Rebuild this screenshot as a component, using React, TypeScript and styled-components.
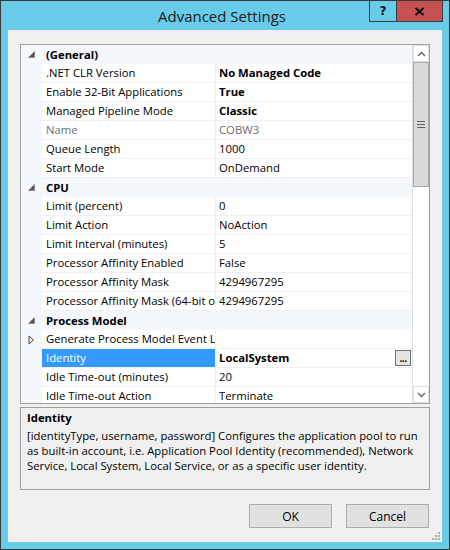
import React from "react";
import styled, { createGlobalStyle } from "styled-components";

const Global = createGlobalStyle`
  html, body { margin: 0; padding: 0; }
  body {
    width: 450px; height: 550px; overflow: hidden;
    font-family: "Open Sans", "Noto Sans", sans-serif;
    font-size: 11.3px; color: #000;
  }
`;

const Window = styled.div`
  width: 450px; height: 550px; box-sizing: border-box;
  background: #69cbea; border: 1px solid #3a3a3a;
  display: flex; flex-direction: column;
`;

const TitleBar = styled.div`
  height: 29px; display: grid; grid-template-columns: 1fr auto 1fr;
  align-items: center; padding-right: 6px;
`;

const Title = styled.div`
  grid-column: 2; font-size: 15px; color: #1a1a1a; padding-top: 1px;
  font-family: "Open Sans", "Noto Sans", sans-serif;
`;

const CaptionButtons = styled.div`
  grid-column: 3; justify-self: end; align-self: start; display: flex;
`;

const CaptionButton = styled.div<{ $w: number; $bg: string }>`
  width: ${(p) => p.$w}px; height: 21px; box-sizing: border-box;
  background: ${(p) => p.$bg}; border: 1px solid #3c3c3c; border-top: none;
  & + & { border-left: none; }
  display: flex; align-items: center; justify-content: center;
  font-family: "DejaVu Sans", sans-serif; font-weight: bold; font-size: 12px; color: #111;
`;

const Client = styled.div`
  position: relative; flex: 1; margin: 0 7px 7px 7px; background: #f0f0f0;
  padding: 14px 12px 14px 12px; display: flex; flex-direction: column;
`;

const Grid = styled.div`
  height: 360px; box-sizing: border-box; border: 1px solid #a0a0a0;
  display: flex; background: #fff;
`;

const Rows = styled.div`
  flex: 1; overflow: hidden; display: flex; flex-direction: column;
`;

const CategoryRow = styled.div`
  height: 19px; flex: none; display: grid; grid-template-columns: 21px 1fr;
  background: #f4f7fc; align-items: center; font-weight: bold; line-height: 19px;
`;

const CategoryLabel = styled.span`padding-left: 4px;`;

const Margin = styled.div`
  background: #f4f7fc; height: 100%; display: flex; align-items: center; justify-content: center;
`;

const PropRow = styled.div`
  height: 19px; flex: none; display: grid; grid-template-columns: 21px 174px 1fr;
  line-height: 18px;
`;

const NameCell = styled.div<{ $sel?: boolean; $dim?: boolean }>`
  box-sizing: border-box; border-bottom: 1px solid #f0f0f0; border-right: 1px solid #f0f0f0;
  padding-left: 4px; white-space: nowrap; overflow: hidden;
  background: ${(p) => (p.$sel ? "#3399ff" : "#fff")};
  color: ${(p) => (p.$sel ? "#fff" : p.$dim ? "#6d6d6d" : "#000")};
`;

const ValueCell = styled.div<{ $bold?: boolean; $dim?: boolean }>`
  box-sizing: border-box; border-bottom: 1px solid #f0f0f0; padding-left: 3px;
  display: flex; align-items: center; white-space: nowrap; overflow: hidden;
  font-weight: ${(p) => (p.$bold ? "bold" : "normal")};
  color: ${(p) => (p.$dim ? "#6d6d6d" : "#000")};
`;

const ValueText = styled.span`flex: 1;`;

const EllipsisButton = styled.div`
  width: 16px; height: 16px; box-sizing: border-box; margin-right: 1px;
  border: 1px solid #707070; background: #e5e5e5; font-weight: bold;
  font-size: 10px; line-height: 14px; text-align: center; letter-spacing: -0.5px;
`;

const Scrollbar = styled.div`
  width: 17px; flex: none; display: flex; flex-direction: column;
  border-left: 1px solid #e0e0e0; background: #fff; box-sizing: border-box;
`;

const ScrollArrow = styled.div`
  height: 17px; flex: none; display: flex; align-items: center; justify-content: center;
  border: 1px solid #e0e0e0; box-sizing: border-box; background: #fff;
`;

const Thumb = styled.div`
  height: 125px; flex: none; background: #dadada; border: 1px solid #a8a8a8;
  box-sizing: border-box; display: flex; align-items: center; justify-content: center;
`;

const Track = styled.div`flex: 1;`;

const Description = styled.div`
  margin-top: 3px; height: 83px; box-sizing: border-box; border: 1px solid #a0a0a0;
  padding: 2px 6px; line-height: 15px;
`;

const DescTitle = styled.div`font-weight: bold; margin-bottom: 3px;`;

const DescText = styled.div``;

const ButtonRow = styled.div`
  margin-top: 14px; display: flex; justify-content: flex-end; gap: 14px; padding-right: 1px;
`;

const Button = styled.div`
  width: 83px; height: 24px; box-sizing: border-box; background: #e1e1e1;
  border: 1px solid #adadad; display: flex; align-items: center; justify-content: center;
  font-size: 12px;
`;

const Grip = styled.svg`position: absolute; right: 2px; bottom: 2px;`;

const Expanded = () => (
  <svg width="7" height="7" viewBox="0 0 7 7">
    <polygon points="6.5,0.5 6.5,6.5 0.5,6.5" fill="#555" stroke="#777" strokeWidth="0.6" />
  </svg>
);

const Collapsed = () => (
  <svg width="7" height="10" viewBox="0 0 7 10">
    <polygon points="1,1 5.5,5 1,9" fill="none" stroke="#444" strokeWidth="1" />
  </svg>
);

const Chevron = ({ up }: { up?: boolean }) => (
  <svg width="9" height="6" viewBox="0 0 9 6">
    <polyline
      points={up ? "1,5 4.5,1.5 8,5" : "1,1 4.5,4.5 8,1"}
      fill="none" stroke="#606060" strokeWidth="1.3"
    />
  </svg>
);

type Item =
  | { kind: "cat"; label: string }
  | { kind: "prop"; name: string; value: string; bold?: boolean; dim?: boolean; sel?: boolean; collapsed?: boolean; ellipsis?: boolean };

const items: Item[] = [
  { kind: "cat", label: "(General)" },
  { kind: "prop", name: ".NET CLR Version", value: "No Managed Code", bold: true },
  { kind: "prop", name: "Enable 32-Bit Applications", value: "True", bold: true },
  { kind: "prop", name: "Managed Pipeline Mode", value: "Classic", bold: true },
  { kind: "prop", name: "Name", value: "COBW3", dim: true },
  { kind: "prop", name: "Queue Length", value: "1000" },
  { kind: "prop", name: "Start Mode", value: "OnDemand" },
  { kind: "cat", label: "CPU" },
  { kind: "prop", name: "Limit (percent)", value: "0" },
  { kind: "prop", name: "Limit Action", value: "NoAction" },
  { kind: "prop", name: "Limit Interval (minutes)", value: "5" },
  { kind: "prop", name: "Processor Affinity Enabled", value: "False" },
  { kind: "prop", name: "Processor Affinity Mask", value: "4294967295" },
  { kind: "prop", name: "Processor Affinity Mask (64-bit option)", value: "4294967295" },
  { kind: "cat", label: "Process Model" },
  { kind: "prop", name: "Generate Process Model Event Log Entry", value: "", collapsed: true },
  { kind: "prop", name: "Identity", value: "LocalSystem", bold: true, sel: true, ellipsis: true },
  { kind: "prop", name: "Idle Time-out (minutes)", value: "20" },
  { kind: "prop", name: "Idle Time-out Action", value: "Terminate" },
];

export default function App() {
  return (
    <>
      <Global />
      <Window>
        <TitleBar>
          <Title>Advanced Settings</Title>
          <CaptionButtons>
            <CaptionButton $w={28} $bg="#69cbea">?</CaptionButton>
            <CaptionButton $w={46} $bg="#c75050">
              <svg width="11" height="9" viewBox="0 0 11 9">
                <path d="M1.5 1 L9.5 8 M9.5 1 L1.5 8" stroke="#111" strokeWidth="2.2" />
              </svg>
            </CaptionButton>
          </CaptionButtons>
        </TitleBar>
        <Client>
          <Grid>
            <Rows>
              {items.map((it, i) =>
                it.kind === "cat" ? (
                  <CategoryRow key={i}>
                    <Margin><Expanded /></Margin>
                    <CategoryLabel>{it.label}</CategoryLabel>
                  </CategoryRow>
                ) : (
                  <PropRow key={i}>
                    <Margin>{it.collapsed ? <Collapsed /> : null}</Margin>
                    <NameCell $sel={it.sel} $dim={it.dim}>{it.name}</NameCell>
                    <ValueCell $bold={it.bold} $dim={it.dim}>
                      <ValueText>{it.value}</ValueText>
                      {it.ellipsis ? <EllipsisButton>...</EllipsisButton> : null}
                    </ValueCell>
                  </PropRow>
                )
              )}
            </Rows>
            <Scrollbar>
              <ScrollArrow><Chevron up /></ScrollArrow>
              <Thumb>
                <svg width="8" height="7" viewBox="0 0 8 7">
                  <path d="M0 0.5 H8 M0 3.5 H8 M0 6.5 H8" stroke="#606060" strokeWidth="1.2" />
                </svg>
              </Thumb>
              <Track />
              <ScrollArrow><Chevron /></ScrollArrow>
            </Scrollbar>
          </Grid>
          <Description>
            <DescTitle>Identity</DescTitle>
            <DescText>
              [identityType, username, password] Configures the application pool to run as built-in account, i.e. Application Pool Identity (recommended), Network Service, Local System, Local Service, or as a specific user identity.
            </DescText>
          </Description>
          <ButtonRow>
            <Button>OK</Button>
            <Button>Cancel</Button>
          </ButtonRow>
          <Grip width="8" height="8" viewBox="0 0 8 8">
            <g fill="#b0b0b0">
              <rect x="6" y="0" width="2" height="2" />
              <rect x="3" y="3" width="2" height="2" />
              <rect x="6" y="3" width="2" height="2" />
              <rect x="0" y="6" width="2" height="2" />
              <rect x="3" y="6" width="2" height="2" />
              <rect x="6" y="6" width="2" height="2" />
            </g>
          </Grip>
        </Client>
      </Window>
    </>
  );
}
